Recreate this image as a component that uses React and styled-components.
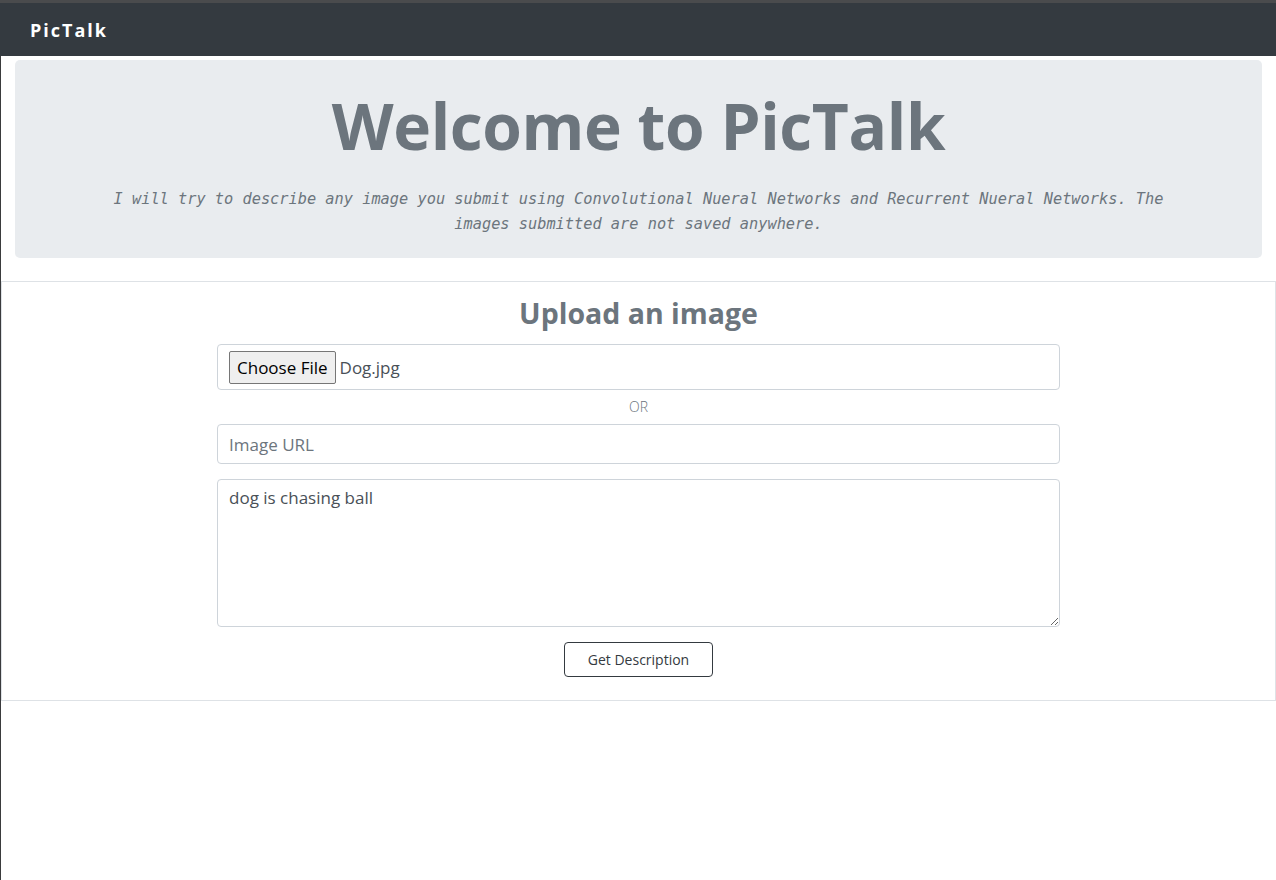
import React from "react";
import styled, { createGlobalStyle } from "styled-components";

const Global = createGlobalStyle`
  html, body { margin: 0; padding: 0; background: #fff; }
  body { font-family: "Open Sans", "Noto Sans", sans-serif; color: #212529; }
  * { box-sizing: border-box; }
`;

const Page = styled.div`
  min-height: 880px;
  border-top: 3px solid #4a4b4d;
  display: flex;
  flex-direction: column;
`;

const Navbar = styled.nav`
  height: 53px;
  background: #343a40;
  display: flex;
  align-items: center;
  padding-left: 30px;
`;

const Brand = styled.span`
  color: #fff;
  font-family: "Open Sans", sans-serif;
  font-weight: 700;
  font-size: 18px;
  letter-spacing: 2px;
`;

const Body = styled.div`
  flex: 1;
  border-left: 1px solid #3a3b3d;
  display: flex;
  flex-direction: column;
`;

const Jumbotron = styled.section`
  margin: 4px 14px 23px 14px;
  height: 198px;
  background: #e9ecef;
  border-radius: 5px;
  display: flex;
  flex-direction: column;
  align-items: center;
  padding-top: 21px;
`;

const Title = styled.h1`
  margin: 0;
  font-family: "Open Sans", sans-serif;
  font-weight: 700;
  font-size: 64px;
  line-height: 90px;
  color: #6c757d;
  letter-spacing: -0.4px;
`;

const Lead = styled.p`
  margin: 16px 0 0;
  width: 1080px;
  text-align: center;
  font-family: "DejaVu Sans Mono", monospace;
  font-style: italic;
  font-size: 15.3px;
  line-height: 25px;
  color: #6c757d;
`;

const Card = styled.section`
  border: 1px solid #dee2e6;
  height: 420px;
  display: flex;
  flex-direction: column;
  align-items: center;
  padding-top: 13px;
`;

const CardTitle = styled.h2`
  margin: 0 0 13px;
  font-family: "Open Sans", sans-serif;
  font-weight: 700;
  font-size: 28.5px;
  line-height: 36px;
  color: #6c757d;
`;

const Form = styled.form`
  width: 843px;
  display: flex;
  flex-direction: column;
  align-items: center;
`;

const FileBox = styled.div`
  width: 100%;
  height: 46px;
  border: 1px solid #ced4da;
  border-radius: 4px;
  display: flex;
  align-items: center;
  padding-left: 11px;
  gap: 4px;
`;

const ChooseButton = styled.button`
  height: 33px;
  padding: 0 7px;
  background: #efefef;
  border: 1px solid #767676;
  border-radius: 2px;
  font-family: "Open Sans", sans-serif;
  font-size: 17px;
  color: #000;
`;

const FileName = styled.span`
  font-family: "Open Sans", sans-serif;
  font-size: 17px;
  color: #495057;
`;

const Or = styled.div`
  height: 34px;
  padding-bottom: 2px;
  display: flex;
  align-items: center;
  justify-content: center;
  font-family: "Open Sans", sans-serif;
  font-weight: 300;
  font-size: 14px;
  color: #6c757d;
`;

const TextInput = styled.input`
  width: 100%;
  height: 40px;
  border: 1px solid #ced4da;
  border-radius: 4px;
  padding: 0 11px;
  font-family: "Open Sans", sans-serif;
  font-size: 17px;
  color: #495057;
  outline: none;
  &::placeholder { color: #6c757d; }
`;

const TextArea = styled.textarea`
  margin-top: 15px;
  width: 100%;
  height: 148px;
  border: 1px solid #ced4da;
  border-radius: 4px;
  padding: 5px 11px;
  font-family: "Open Sans", sans-serif;
  font-size: 17px;
  line-height: 25px;
  color: #495057;
  resize: vertical;
  outline: none;
`;

const SubmitButton = styled.button`
  margin-top: 15px;
  width: 149px;
  height: 35px;
  background: #fff;
  border: 1px solid #343a40;
  border-radius: 4px;
  font-family: "Open Sans", sans-serif;
  font-size: 14px;
  color: #343a40;
`;

export default function App() {
  return (
    <>
      <Global />
      <Page>
        <Navbar>
          <Brand>PicTalk</Brand>
        </Navbar>
        <Body>
          <Jumbotron>
            <Title>Welcome to PicTalk</Title>
            <Lead>
              I will try to describe any image you submit using Convolutional Nueral Networks and Recurrent Nueral Networks. The images submitted are not saved anywhere.
            </Lead>
          </Jumbotron>
          <Card>
            <CardTitle>Upload an image</CardTitle>
            <Form onSubmit={(e) => e.preventDefault()}>
              <FileBox>
                <ChooseButton type="button">Choose File</ChooseButton>
                <FileName>Dog.jpg</FileName>
              </FileBox>
              <Or>OR</Or>
              <TextInput placeholder="Image URL" />
              <TextArea defaultValue="dog is chasing ball" />
              <SubmitButton type="submit">Get Description</SubmitButton>
            </Form>
          </Card>
        </Body>
      </Page>
    </>
  );
}
